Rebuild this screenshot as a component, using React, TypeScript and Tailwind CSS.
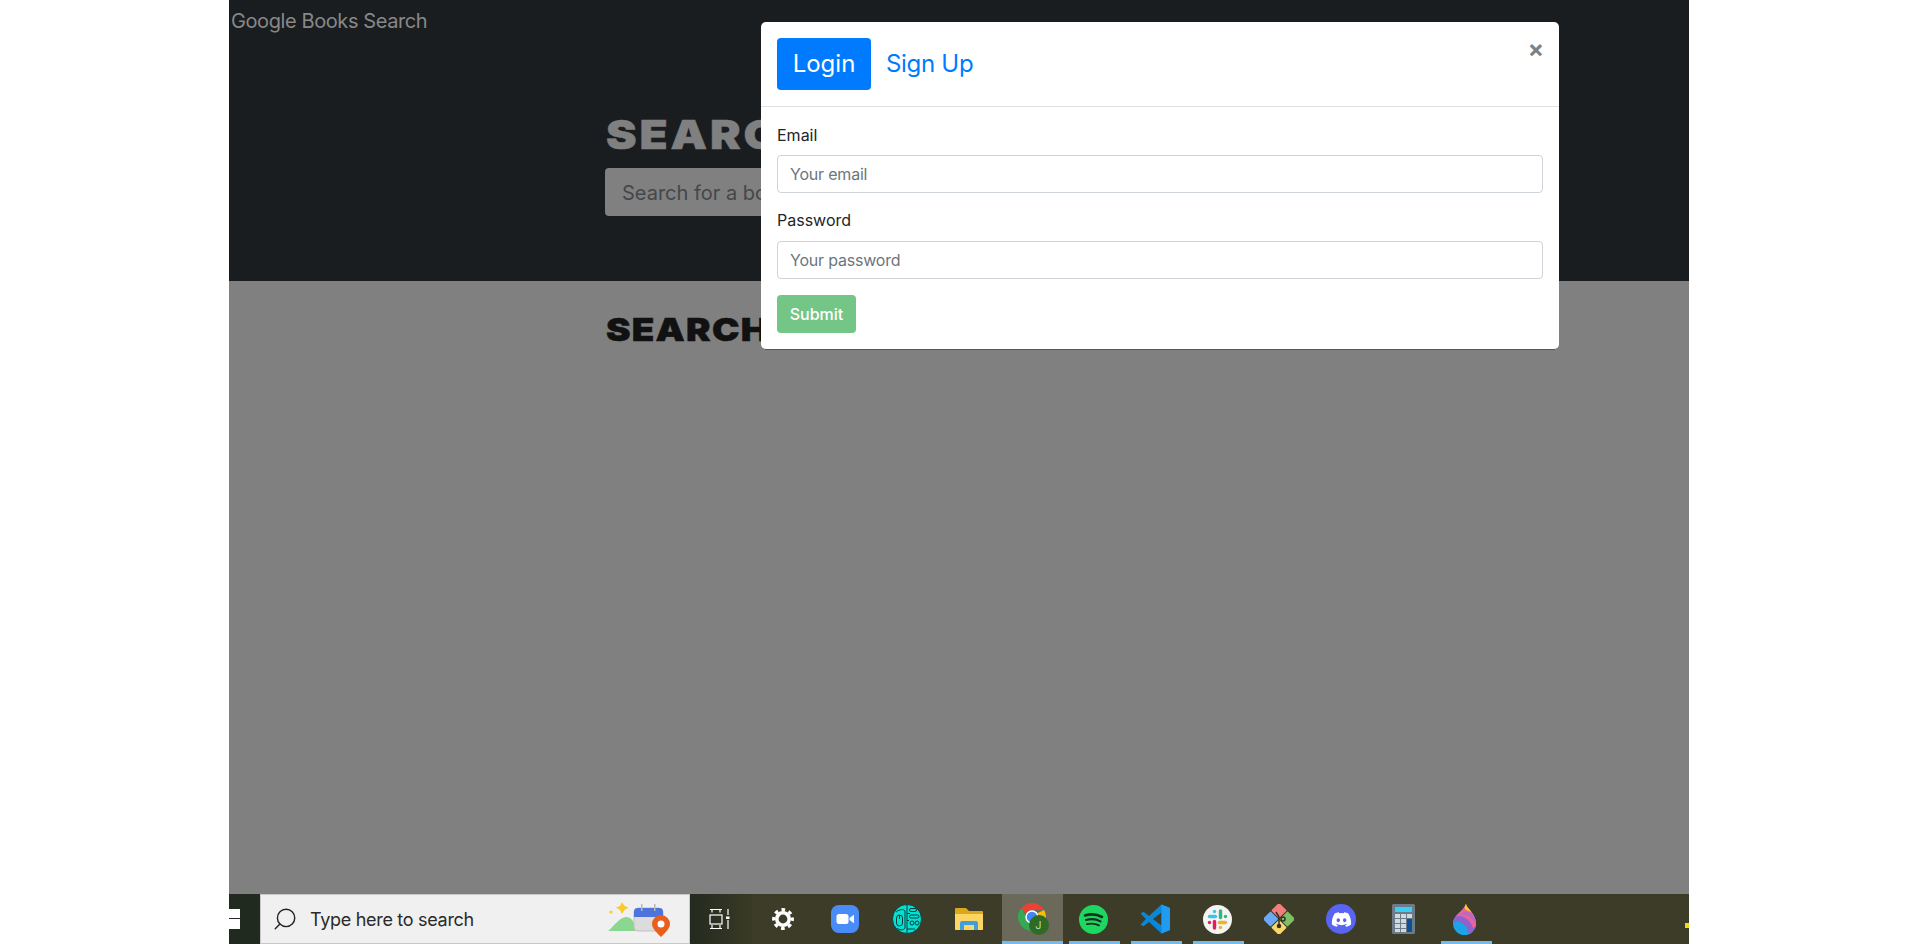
import React from 'react';
import { Search } from 'lucide-react';
import { FaDiscord } from 'react-icons/fa';

const BODY_FONT = "font-['Inter','Noto_Sans',sans-serif]";

const GearIcon = () => (
  <svg width="24" height="24" viewBox="0 0 24 24" fill="none" stroke="#fff">
    <circle cx="12" cy="12" r="6.200" strokeWidth="3.600" />
    <circle cx="12" cy="12" r="9.300" strokeWidth="3.200" strokeDasharray="3.700 3.600" strokeDashoffset="1.800" />
  </svg>
);

const ZoomIcon = () => (
  <svg width="28" height="28" viewBox="0 0 28 28">
    <rect width="28" height="28" rx="8" fill="#4a8cf7" />
    <rect x="5.500" y="9" width="12" height="10" rx="2.500" fill="#fff" />
    <path d="M18.500 13l4.500-3.200v8.400L18.500 15z" fill="#fff" />
  </svg>
);

const BrainIcon = () => (
  <svg width="30" height="30" viewBox="0 0 30 30">
    <circle cx="15" cy="15" r="14.500" fill="#06e0d0" stroke="#0b2b30" strokeWidth="0.800" />
    <g fill="none" stroke="#0b3a3e" strokeWidth="1">
      <path d="M15 1v28M4 8c4-3 8-3 9-1v17c-2 3-6 2-8 0" />
      <rect x="4.500" y="11" width="6" height="11" rx="3" />
      <path d="M7.500 11v4" />
      <rect x="17.500" y="4.500" width="7" height="3" rx="1.500" />
      <rect x="17.500" y="11" width="9.500" height="3" rx="1.500" />
      <circle cx="20" cy="19" r="2" />
      <circle cx="25" cy="19" r="2" />
      <path d="M15 9.500h3M15 16.500h2M15 25h8" />
    </g>
  </svg>
);

const FolderIcon = () => (
  <svg width="28" height="24" viewBox="0 0 28 24">
    <path d="M0 2a1 1 0 011-1h10l3 3h13a1 1 0 011 1v17a1 1 0 01-1 1H1a1 1 0 01-1-1z" fill="#dba81c" />
    <path d="M0 7h27a1 1 0 011 1v14a1 1 0 01-1 1H1a1 1 0 01-1-1z" fill="#fcd662" />
    <path d="M5 23v-7a2 2 0 012-2h14a2 2 0 012 2v7h-4v-5H9v5z" fill="#3f9ee0" />
  </svg>
);

const ChromeIcon = () => (
  <span className="relative block w-[31px] h-[32px] translate-x-[2px]">
    <svg width="28" height="28" viewBox="0 0 28 28" className="block">
      <path d="M14 0a14 14 0 0112.100 7H14a7 7 0 00-6.400 4.100L3.400 5A14 14 0 0114 0z" fill="#ea4335" />
      <path d="M26.100 7A14 14 0 0114 28l6-10.500A7 7 0 0019.600 10z" fill="#fbbc04" />
      <path d="M14 28A14 14 0 013.400 5l6.200 10.500a7 7 0 006.200 5.300z" fill="#34a853" />
      <circle cx="14" cy="14" r="6" fill="#4285f4" stroke="#fff" strokeWidth="1.500" />
    </svg>
    <span className={`absolute right-0 bottom-0 w-[20px] h-[20px] rounded-full bg-[#2e6b25] text-[#b9d4ad] text-[11px] leading-[20px] text-center ${BODY_FONT}`}>J</span>
  </span>
);

const SpotifyIcon = () => (
  <svg width="29" height="29" viewBox="0 0 29 29">
    <circle cx="14.500" cy="14.500" r="14.500" fill="#1ed760" />
    <g fill="none" stroke="#17301f" strokeLinecap="round">
      <path d="M6 10.500c6-1.800 12-1.200 17 1.500" strokeWidth="2.600" />
      <path d="M7 15c5-1.400 10.500-.9 14.500 1.400" strokeWidth="2.200" />
      <path d="M8 19.200c4.500-1 8.500-.6 12 1.200" strokeWidth="1.800" />
    </g>
  </svg>
);

const VsCodeIcon = () => (
  <svg width="30" height="30" viewBox="0 0 30 30">
    <path d="M21.500 0.500L9 12 3.500 7.800 0.500 9.500 6 15l-5.500 5.500 3 1.700L9 18l12.500 11.500L30 26V4z M21.500 8.500v13L13 15z" fill="#0a87d6" fillRule="evenodd" />
    <path d="M21.500 0.500L30 4v22l-8.500 3.500z" fill="#1f9cf0" />
  </svg>
);

const SlackIcon = () => (
  <svg width="29" height="29" viewBox="0 0 29 29">
    <circle cx="14.500" cy="14.500" r="14.500" fill="#f4f4f2" />
    <g strokeWidth="3.400" strokeLinecap="round" fill="none">
      <path d="M6.500 11.500h6" stroke="#36c5f0" />
      <path d="M11.500 6.500v.1" stroke="#36c5f0" />
      <path d="M17.500 6v6.500" stroke="#2eb67d" />
      <path d="M22.500 11.500v.1" stroke="#2eb67d" />
      <path d="M16.500 17.500h6" stroke="#ecb22e" />
      <path d="M17.500 22.500v.1" stroke="#ecb22e" />
      <path d="M11.500 16.500v6.500" stroke="#e01e5a" />
      <path d="M6.500 17.500v.1" stroke="#e01e5a" />
    </g>
  </svg>
);

const GitGraphIcon = () => (
  <svg width="30" height="30" viewBox="0 0 30 30">
    <g transform="rotate(45 15 15)">
      <rect x="3.500" y="3.500" width="11" height="11" rx="1" fill="#f37c7c" />
      <rect x="15.500" y="3.500" width="11" height="11" rx="1" fill="#7cc062" />
      <rect x="15.500" y="15.500" width="11" height="11" rx="1" fill="#f7d66a" />
      <rect x="3.500" y="15.500" width="11" height="11" rx="1" fill="#6aa9f5" />
    </g>
    <g fill="none" stroke="#33302a" strokeWidth="1.500">
      <path d="M12 8l3 5v8" />
      <circle cx="19" cy="15" r="2" />
      <circle cx="15" cy="22" r="1.500" fill="#33302a" />
    </g>
  </svg>
);

const CalculatorIcon = () => (
  <svg width="23" height="30" viewBox="0 0 23 30">
    <rect width="23" height="30" rx="1.500" fill="#6c7b87" />
    <rect x="3" y="3" width="17" height="5" fill="#3bcdf2" />
    <g fill="#cfd9df">
      <rect x="3" y="10" width="5" height="4" />
      <rect x="9" y="10" width="5" height="4" />
      <rect x="15" y="10" width="5" height="4" />
      <rect x="3" y="15" width="5" height="4" />
      <rect x="9" y="15" width="5" height="4" />
      <rect x="3" y="20" width="5" height="4" />
      <rect x="9" y="20" width="5" height="4" />
      <rect x="3" y="25" width="5" height="3" />
      <rect x="9" y="25" width="5" height="3" />
    </g>
    <rect x="15" y="15" width="5" height="13" fill="#0e4f91" />
  </svg>
);

const PaintIcon = () => (
  <svg width="24" height="31" viewBox="0 0 24 31">
    <defs>
      <clipPath id="drop">
        <path d="M13 0c1 5 10 10 10 19.500a11.500 11.500 0 01-23 0C0 11 10 8 13 0z" />
      </clipPath>
    </defs>
    <g clipPath="url(#drop)">
      <rect width="24" height="31" fill="#19a5e8" />
      <path d="M0 19c7-4 14 1 16 12h8V10H0z" fill="#8e63cc" />
      <path d="M0 13c8-3 17 1 20 11l4-2V6H0z" fill="#f0609c" />
      <path d="M3 12c6-3 14-1 18 6l3-2V8L14 7z" fill="#b76ac4" />
      <path d="M6 6c5 0 9 1 14 5L24 0H6z" fill="#f5628f" />
      <path d="M10 0h4c1 3 3 6 6 8-3 0-6-1-8-3 0-2-1-3-2-5z" fill="#f8c91c" />
    </g>
  </svg>
);

const DiscordIcon = () => (
  <span className="flex items-center justify-center w-[30px] h-[30px] rounded-full bg-[#5865f2] text-white">
    <FaDiscord size={21} />
  </span>
);

const TASK_ITEMS = [
  { key: 'settings', icon: <GearIcon /> },
  { key: 'zoom', icon: <ZoomIcon /> },
  { key: 'brain', icon: <BrainIcon /> },
  { key: 'folder', icon: <FolderIcon /> },
  { key: 'chrome', icon: <ChromeIcon />, active: true },
  { key: 'spotify', icon: <SpotifyIcon />, open: true },
  { key: 'vscode', icon: <VsCodeIcon />, open: true },
  { key: 'slack', icon: <SlackIcon />, open: true },
  { key: 'git', icon: <GitGraphIcon /> },
  { key: 'discord', icon: <DiscordIcon /> },
  { key: 'calc', icon: <CalculatorIcon /> },
  { key: 'paint', icon: <PaintIcon />, open: true },
];

const TaskbarItem = ({ icon, active, open }: { icon: React.ReactNode; active?: boolean; open?: boolean }) => (
  <div className="relative flex items-center justify-center w-[62px] h-full">
    {active && (
      <span className="absolute left-[2px] right-[-1px] inset-y-0 bg-[#6a695a] border-b-[3px] border-[#76b9ed]" />
    )}
    <span className="relative">{icon}</span>
    {open && <span className="absolute left-[7px] right-[4px] bottom-0 h-[3px] bg-[#76b9ed]" />}
  </div>
);

const Taskbar = () => (
  <div className="relative flex h-[50px] bg-[#3d3c28] overflow-hidden">
    <div className="flex items-center w-[31px] shrink-0 bg-[#212a1e]">
      <div className="flex flex-col gap-[1px] w-[11px]">
        <span className="h-[9px] bg-white" />
        <span className="h-[10px] bg-white" />
      </div>
    </div>
    <div className={`flex items-center w-[430px] shrink-0 bg-[#f0f0f0] border border-[#c9c9c9] pl-[11px] pr-[19px] ${BODY_FONT}`}>
      <Search size={26} strokeWidth={1.300} className="text-[#222] -scale-x-100 mr-[12px]" />
      <span className="text-[18px] text-[#2a2a2a] tracking-[-0.3px]">Type here to search</span>
      <svg width="62" height="40" viewBox="0 0 62 40" className="ml-auto">
        <path d="M8 4l2.500 4 4 1.500-4 2.500-2.500 4-2-4-4-2.500 4-1.500z" fill="#fbc926" transform="translate(6 -1)" />
        <circle cx="3" cy="13" r="1.500" fill="#fbc926" />
        <path d="M0 32c6-5 12-14 18-14 6 0 9 6 10 14z" fill="#8ad88f" />
        <rect x="26" y="9" width="29" height="23" rx="4" fill="#dcdcdc" stroke="#c2c2c2" />
        <path d="M26 18v-5a4 4 0 014-4h21a4 4 0 014 4v5z" fill="#4d74dd" />
        <rect x="33" y="5" width="1.500" height="7" fill="#b7b7b7" />
        <rect x="46" y="5" width="1.500" height="7" fill="#b7b7b7" />
        <path d="M53 38c-5-5-9-9-9-13a9 9 0 0118 0c0 4-4 8-9 13z" fill="#e8601c" />
        <circle cx="53" cy="25" r="3.500" fill="#fff" />
      </svg>
    </div>
    <div className="flex items-center justify-center w-[62px] shrink-0 pr-[3px] bg-linear-to-r from-[#232a1f] to-[#3a3a26]">
      <svg width="21" height="20" viewBox="0 0 21 20" fill="none" stroke="#fff" strokeWidth="1.200">
        <path d="M1 0.500h12M1 19.500h12M3 0.500v3M11 0.500v3M3 16v3.500M11 16v3.500" />
        <rect x="1" y="6" width="12" height="9" />
        <path d="M19 0v6M19 11v9" />
        <rect x="17" y="7.500" width="3.500" height="2.500" fill="#fff" stroke="none" />
      </svg>
    </div>
    {TASK_ITEMS.map(({ key, ...item }) => (
      <TaskbarItem key={key} {...item} />
    ))}
    <span className="absolute right-0 top-[29px] w-[4px] h-[5px] bg-[#f6d916]" />
  </div>
);

const LoginModal = () => (
  <div className={`absolute left-[532px] top-[22px] w-[798px] h-[328px] bg-white rounded-[5px] border-b border-[#555] text-[#212529] ${BODY_FONT}`}>
    <div className="flex items-start justify-between h-[85px] border-b border-[#dee2e6] pt-[16px] pl-[16px] pr-[16px]">
      <div className="flex gap-[15px] text-[24px]">
        <span className="flex items-center justify-center w-[94px] h-[52px] rounded-[4px] bg-[#007bff] text-white">Login</span>
        <span className="flex items-center h-[52px] text-[#007bff] tracking-[-0.3px]">Sign Up</span>
      </div>
      <span className="mt-[-1px] mr-[-1px] text-[24px] leading-[24px] font-bold text-[#808080]">×</span>
    </div>
    <div className="flex flex-col px-[16px] pt-[16px]">
      <label className="text-[16px] leading-[24px] mb-[8px]">Email</label>
      <input readOnly placeholder="Your email" className="h-[38px] px-[12px] border border-[#ced4da] rounded-[4px] text-[16px] tracking-[-0.2px] placeholder:text-[#6c757d] outline-none" />
      <label className="text-[16px] leading-[24px] mt-[15px] mb-[9px]">Password</label>
      <input readOnly placeholder="Your password" className="h-[38px] px-[12px] border border-[#ced4da] rounded-[4px] text-[16px] tracking-[-0.2px] placeholder:text-[#6c757d] outline-none" />
      <button className="w-[79px] h-[38px] mt-[16px] rounded-[4px] bg-[#74c687] text-white text-[16px] font-medium">Submit</button>
    </div>
  </div>
);

const App = () => (
  <div className={`h-[944px] overflow-hidden bg-white pl-[229px] pr-[228px] ${BODY_FONT}`}>
    <div className="relative flex flex-col h-full">
      <div className="h-[281px] bg-[#1a1d20] shrink-0">
        <div className="pl-[2px] pt-[8px] text-[20px] leading-[26px] tracking-[-0.4px] text-[#888]">Google Books Search</div>
        <div className="pl-[377px] pt-[78px]">
          <h1 className="whitespace-nowrap origin-left scale-x-[1.15] text-[40px] leading-[46px] font-black tracking-[2.500px] text-[#808080] [-webkit-text-stroke:0.500px_#808080]">SEARCH FOR BOOKS!</h1>
          <div className="w-[500px] h-[48px] mt-[10px] ml-[-1px] pl-[17px] rounded-[4px] bg-[#808080] text-[#43474b] text-[20px] leading-[50px]">Search for a book</div>
        </div>
      </div>
      <div className="flex-1 bg-[#808080] pl-[377px] pt-[30px]">
        <h2 className="whitespace-nowrap origin-left scale-x-[1.15] text-[32px] leading-[38px] font-black tracking-[1.100px] text-[#111] [-webkit-text-stroke:0.500px_#111]">SEARCH FOR A BOOK TO BEGIN</h2>
      </div>
      <Taskbar />
      <LoginModal />
    </div>
  </div>
);

export default App;
